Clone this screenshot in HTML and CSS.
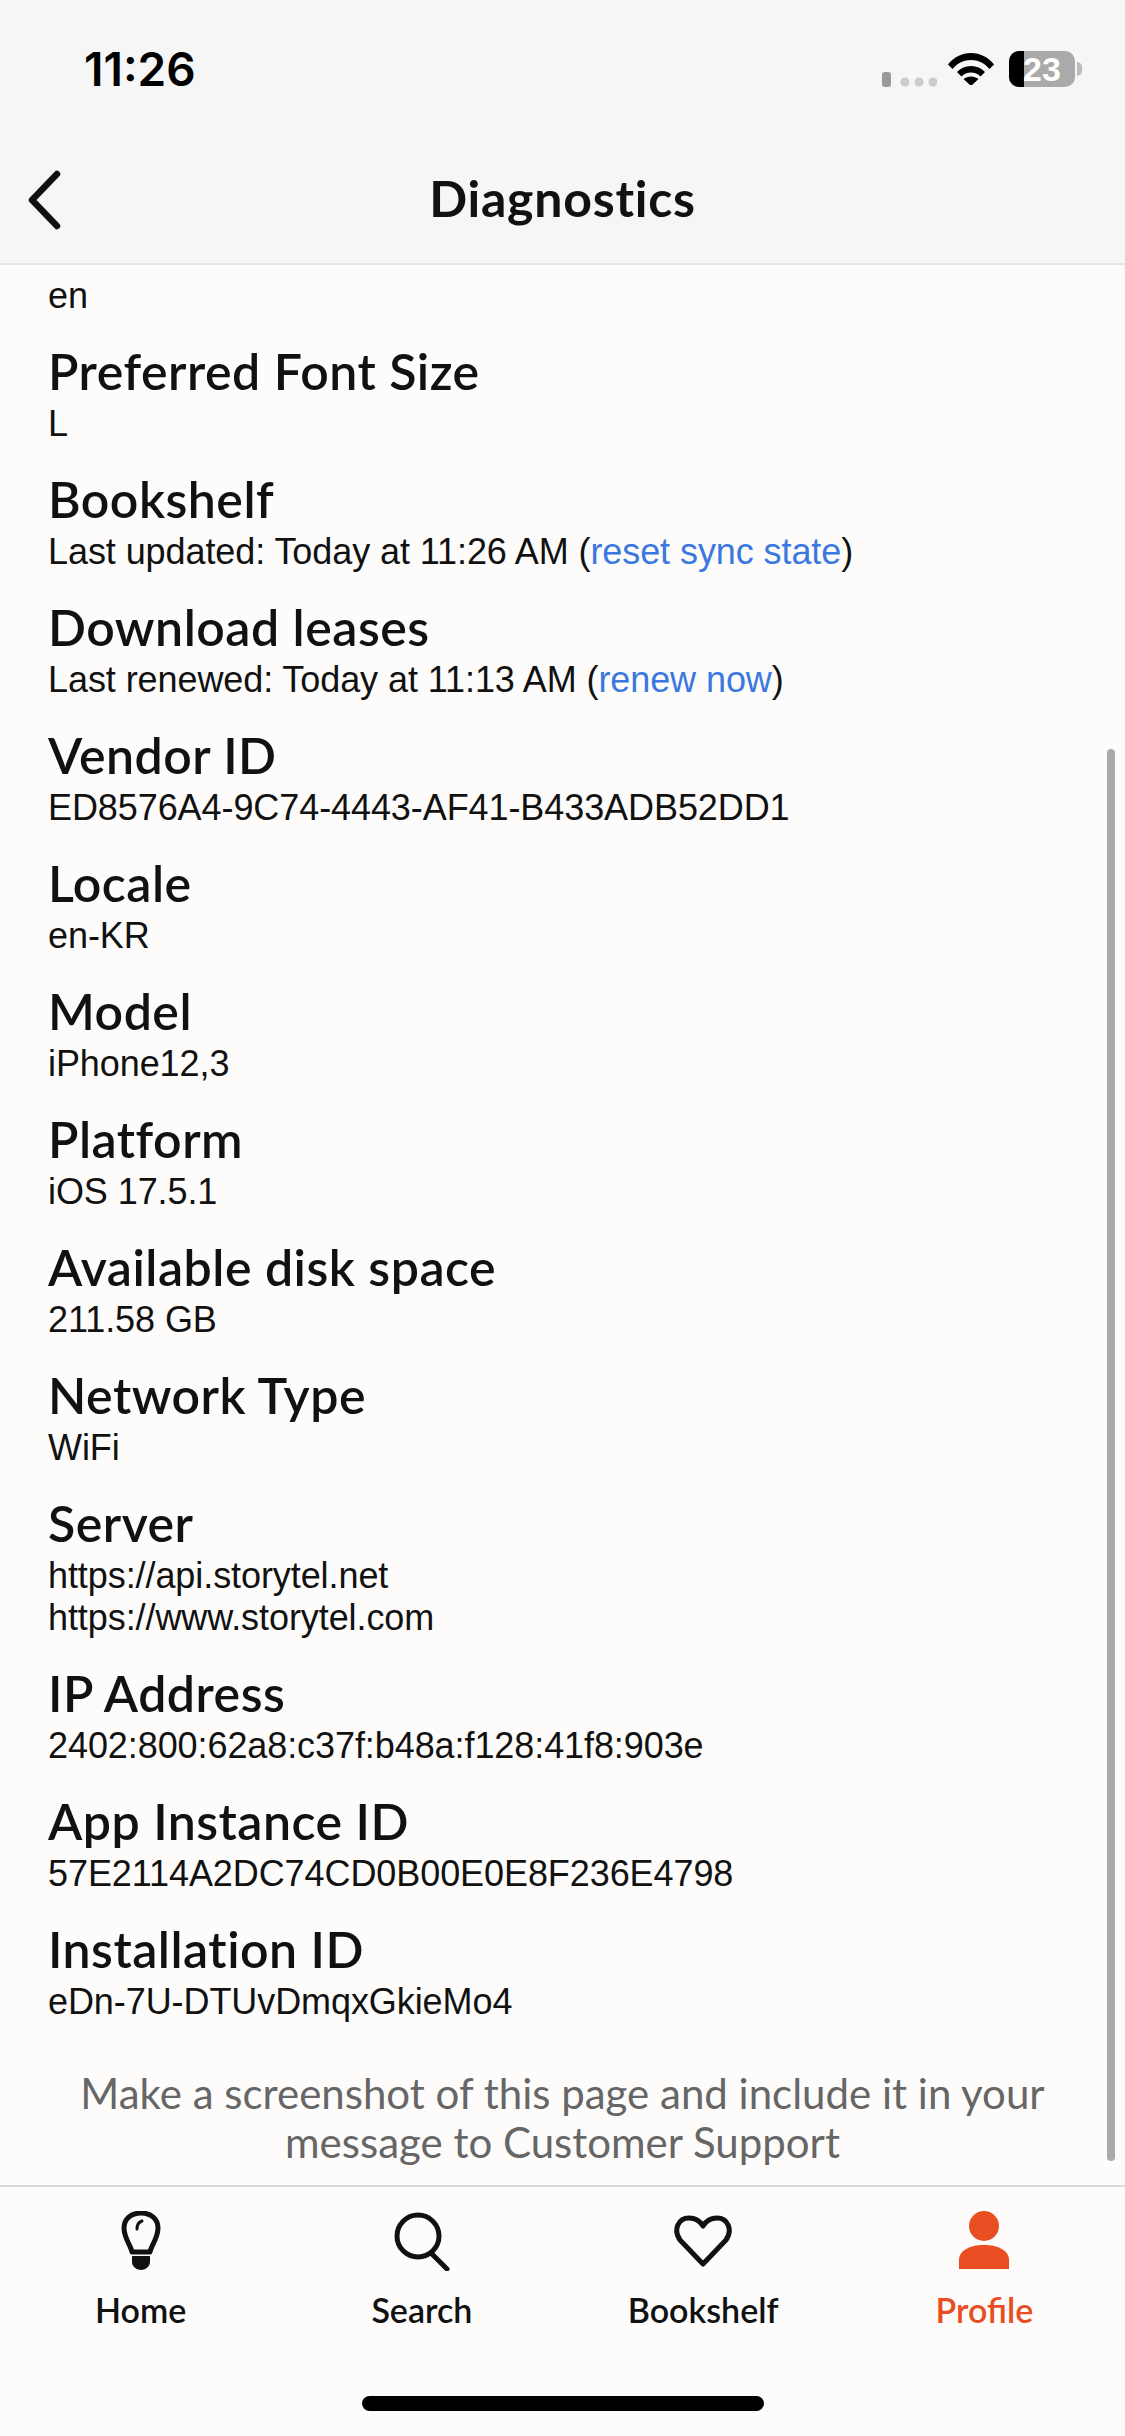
FILE: index.html
```html
<!DOCTYPE html>
<html lang="en">
<head>
<meta charset="utf-8">
<title>Diagnostics</title>
<link rel="stylesheet" href="styles.css">
</head>
<body>
<div class="app">
  <header class="top">
    <div class="status">
      <span class="time">11:26</span>
      <div class="status-icons">
        <svg class="signal" width="55" height="18" viewBox="0 0 55 18"><rect x="0" y="1" width="9" height="15" rx="3" fill="#999"/><circle cx="23" cy="11" r="4.5" fill="#ccc"/><circle cx="37" cy="11" r="4.5" fill="#ccc"/><circle cx="51" cy="11" r="4.5" fill="#ccc"/></svg>
        <svg class="wifi" width="46" height="34" viewBox="0 0 46 34"><path d="M0 13.500C6 6 14 2 23 2s17 4 23 11.500l-4.500 4.500C36.500 12 30 9 23 9S9.500 12 4.500 18Z" fill="#000"/><path d="M9 21c3.500-4 8.500-6 14-6s10.500 2 14 6l-4.500 4.500c-2.500-2.700-6-4-9.500-4s-7 1.300-9.500 4Z" fill="#000"/><path d="M15.500 28c2-1.600 4.800-2.500 7.500-2.500s5.500.9 7.500 2.500L23 35Z" fill="#000"/></svg>
        <div class="battery"><span class="battery-fill"></span><span class="battery-num">23</span></div>
        <span class="battery-nub"></span>
      </div>
    </div>
    <div class="nav">
      <svg class="back" width="38" height="60" viewBox="0 0 38 60"><path d="M32 4 7 30l25 26" fill="none" stroke="#111" stroke-width="6.500" stroke-linecap="round" stroke-linejoin="round"/></svg>
      <h1 class="nav-title">Diagnostics</h1>
    </div>
  </header>

  <main class="content">
    <div class="list">
      <p class="value">en</p>
      <section class="row"><h2 class="label">Preferred Font Size</h2><p class="value">L</p></section>
      <section class="row"><h2 class="label">Bookshelf</h2><p class="value">Last updated: Today at 11:26 AM (<a class="link">reset sync state</a>)</p></section>
      <section class="row"><h2 class="label">Download leases</h2><p class="value">Last renewed: Today at 11:13 AM (<a class="link">renew now</a>)</p></section>
      <section class="row"><h2 class="label">Vendor ID</h2><p class="value">ED8576A4-9C74-4443-AF41-B433ADB52DD1</p></section>
      <section class="row"><h2 class="label">Locale</h2><p class="value">en-KR</p></section>
      <section class="row"><h2 class="label">Model</h2><p class="value">iPhone12,3</p></section>
      <section class="row"><h2 class="label">Platform</h2><p class="value">iOS 17.5.1</p></section>
      <section class="row"><h2 class="label">Available disk space</h2><p class="value">211.58 GB</p></section>
      <section class="row"><h2 class="label">Network Type</h2><p class="value">WiFi</p></section>
      <section class="row"><h2 class="label">Server</h2><p class="value">https://api.storytel.net</p><p class="value">https://www.storytel.com</p></section>
      <section class="row"><h2 class="label">IP Address</h2><p class="value">2402:800:62a8:c37f:b48a:f128:41f8:903e</p></section>
      <section class="row"><h2 class="label">App Instance ID</h2><p class="value">57E2114A2DC74CD0B00E0E8F236E4798</p></section>
      <section class="row"><h2 class="label">Installation ID</h2><p class="value">eDn-7U-DTUvDmqxGkieMo4</p></section>
    </div>
    <p class="note">Make a screenshot of this page and include it in your<br>message to Customer Support</p>
    <span class="scrollbar"></span>
  </main>

  <nav class="tabs">
    <a class="tab">
      <svg class="tab-icon" width="60" height="60" viewBox="0 0 60 60"><path d="M21 41c-1-6-8-14-8-24C13 8 20 2 30 2s17 6 17 15c0 10-7 18-8 24Z" fill="none" stroke="#111" stroke-width="5" stroke-linejoin="round"/><path d="M21 45h18v6c0 4-4 8-9 8s-9-4-9-8Z" fill="#111"/><path d="M31 10c-3 1-5 4-5 8" fill="none" stroke="#111" stroke-width="3" stroke-linecap="round"/></svg>
      <span>Home</span>
    </a>
    <a class="tab">
      <svg class="tab-icon" width="60" height="60" viewBox="0 0 60 60"><circle cx="26" cy="25" r="21" fill="none" stroke="#111" stroke-width="5"/><path d="M39 42 55 58" fill="none" stroke="#111" stroke-width="5" stroke-linecap="round"/></svg>
      <span>Search</span>
    </a>
    <a class="tab">
      <svg class="tab-icon" width="60" height="60" viewBox="0 0 60 60"><path d="M30 53 7 29C0 19 5 7 16 7c6 0 11 3 14 8 3-5 8-8 14-8 11 0 16 12 9 22Z" fill="none" stroke="#111" stroke-width="5" stroke-linejoin="round"/></svg>
      <span>Bookshelf</span>
    </a>
    <a class="tab tab-active">
      <svg class="tab-icon" width="60" height="60" viewBox="0 0 60 60"><circle cx="30" cy="15" r="15" fill="#e84e22"/><path d="M5 58c0-2 0-6 0-9 0-9 10-15 25-15s25 6 25 15v9Z" fill="#e84e22"/></svg>
      <span>Profile</span>
    </a>
  </nav>
  <div class="home-area"><span class="home-bar"></span></div>
</div>
</body>
</html>
```

FILE: styles.css
```css
* { box-sizing: border-box; margin: 0; padding: 0; }
html, body { width: 1125px; height: 2436px; overflow: hidden; }
body { background: #fdfcfb; color: #111; font-family: "Liberation Sans", Arial, sans-serif; }
.app { width: 1125px; height: 2436px; display: flex; flex-direction: column; }

.top { height: 265px; background: #f6f6f7; border-bottom: 2px solid #e5e5e5; flex: none; }
.status { height: 136px; display: flex; justify-content: space-between; align-items: flex-start; padding: 42px 43px 0 84px; }
.time { font-size: 46px; line-height: 54px; font-weight: 600; font-family: Inter, sans-serif; color: #000; letter-spacing: 0; }
.status-icons { display: flex; align-items: flex-start; padding-top: 9px; }
.signal { margin: 20px 11px 0 0; }
.wifi { margin-right: 15px; }
.battery { position: relative; width: 66px; height: 36px; border-radius: 10px; background: #aaa; overflow: hidden; text-align: center; }
.battery-fill { position: absolute; left: 0; top: 0; bottom: 0; width: 15px; background: #000; }
.battery-num { position: relative; color: #fff; font-size: 34px; line-height: 36px; font-weight: 700; }
.battery-nub { width: 5px; height: 14px; margin: 11px 0 0 2px; background: #bbb; border-radius: 0 7px 7px 0; }

.nav { position: relative; height: 127px; display: flex; align-items: center; justify-content: center; padding-bottom: 3px; }
.back { position: absolute; left: 25px; top: 34px; }
.nav-title { font-family: Lato, sans-serif; font-size: 50px; line-height: 54px; font-weight: 700; letter-spacing: 0.75px; color: #111; }

.content { position: relative; flex: 1; min-height: 0; display: flex; flex-direction: column; justify-content: space-between; overflow: hidden; padding: 10px 48px 0; }
.list { display: flex; flex-direction: column; gap: 32px; }
.label { font-family: Lato, sans-serif; font-size: 50px; line-height: 45px; padding-bottom: 9px; font-weight: 600; letter-spacing: 0.5px; color: #111; }
.value { font-size: 36px; line-height: 42px; letter-spacing: -0.08px; color: #111; }
.link { color: #3a78e0; }
.note { font-family: Lato, sans-serif; font-size: 42px; line-height: 49px; text-align: center; color: #666; margin: 0 -20px 18px; }
.scrollbar { position: absolute; right: 10px; top: 484px; width: 8px; height: 1412px; border-radius: 4px; background: #aaa; }

.tabs { flex: none; height: 174px; display: grid; grid-template-columns: repeat(4, 1fr); border-top: 2px solid #d8d8d8; padding-top: 24px; }
.tab { display: flex; flex-direction: column; align-items: center; font-family: Lato, sans-serif; font-size: 34px; line-height: 40px; font-weight: 600; color: #111; }
.tab-icon { margin-bottom: 19px; }
.tab-active { color: #e84e22; }
.home-area { flex: none; height: 77px; display: flex; justify-content: center; padding-top: 37px; }
.home-bar { width: 402px; height: 15px; border-radius: 8px; background: #000; }
```
